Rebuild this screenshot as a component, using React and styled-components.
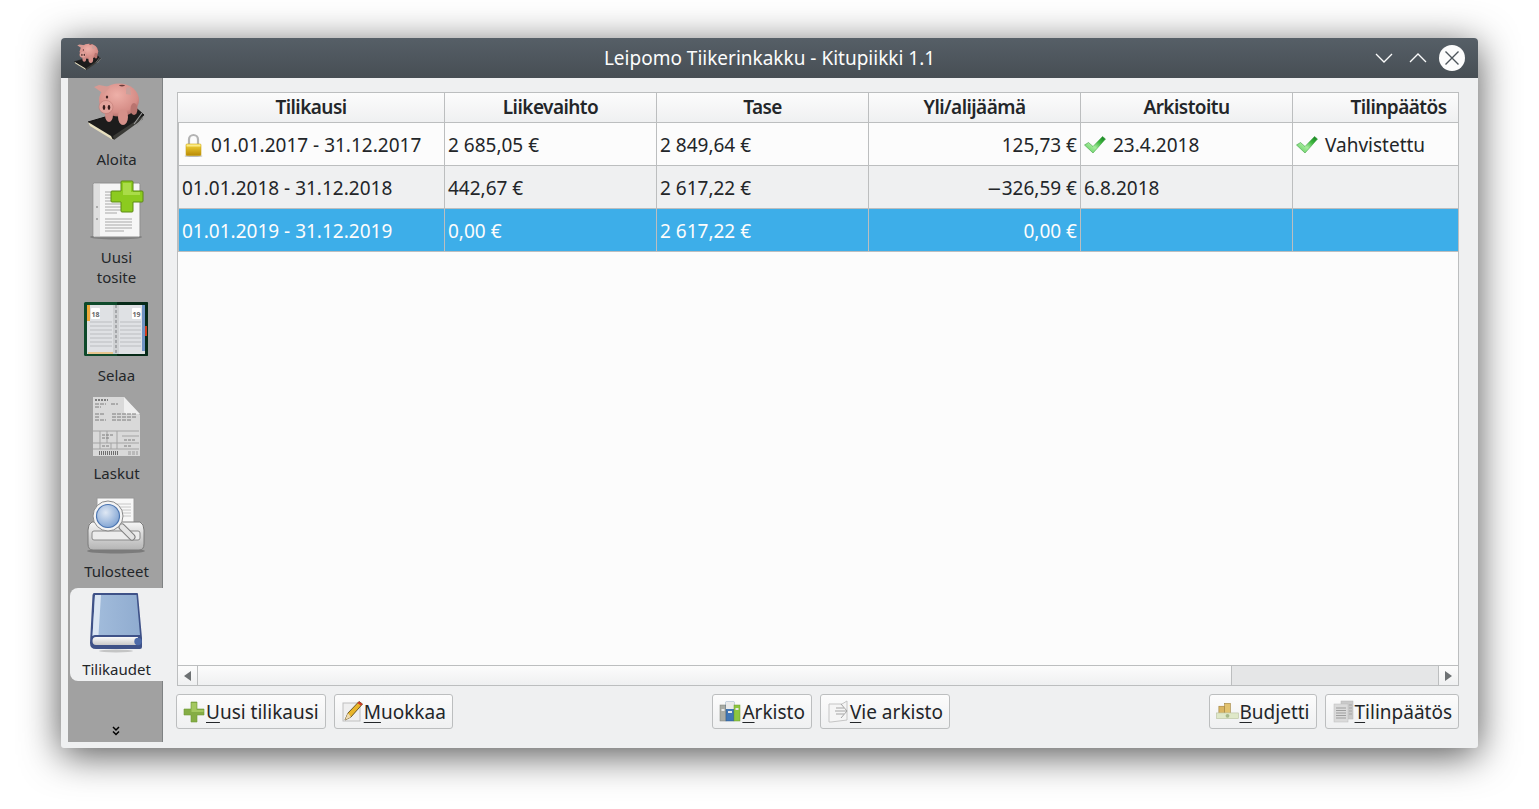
import styled, { createGlobalStyle } from "styled-components";

const GlobalStyle = createGlobalStyle`
  html, body { margin: 0; padding: 0; background: #fff; }
  body { font-family: "Noto Sans", "Open Sans", sans-serif; color: #232629; overflow: hidden; }
`;

const Page = styled.div`
  width: 1539px;
  height: 809px;
  padding: 38px 61px;
  box-sizing: border-box;
  overflow: hidden;
`;

const Win = styled.div`
  width: 1417px;
  height: 710px;
  display: flex;
  flex-direction: column;
  background: #eff0f1;
  border-radius: 4px 4px 3px 3px;
  box-shadow: 0 7px 38px rgba(0, 0, 0, 0.68);
  overflow: hidden;
`;

const TitleBar = styled.div`
  height: 40px;
  flex: none;
  display: grid;
  grid-template-columns: 1fr auto 1fr;
  align-items: center;
  background: linear-gradient(#565f67, #474e54);
  color: #fcfcfc;
  font-size: 19px;
  padding: 0 13px;
  box-sizing: border-box;
`;

const TitleIcon = styled.div`
  width: 30px;
  height: 28px;
  margin: -3px 0 0 -1px;
`;

const WinButtons = styled.div`
  display: flex;
  justify-content: flex-end;
  align-items: center;
  gap: 10px;
`;

const WinBtn = styled.div`
  width: 24px;
  height: 26px;
  display: flex;
  align-items: center;
  justify-content: center;
`;

const CloseBtn = styled.div`
  width: 26px;
  height: 26px;
  margin-left: -1px;
  border-radius: 50%;
  background: #fcfcfc;
  display: flex;
  align-items: center;
  justify-content: center;
`;

const Body = styled.div`
  flex: 1;
  min-height: 0;
  display: flex;
  padding-left: 7px;
`;

const Sidebar = styled.div`
  width: 95px;
  flex: none;
  margin-bottom: 6px;
  background: #a1a1a1;
  border-right: 1px solid #7f8283;
  box-sizing: border-box;
  display: flex;
  flex-direction: column;
  align-items: flex-end;
  font-size: 15px;
`;

const NavItem = styled.div`
  width: 93px;
  margin-right: -1px;
  margin-bottom: 5px;
  padding: 4px 0 2px;
  display: flex;
  flex-direction: column;
  align-items: center;
  box-sizing: border-box;
  border-radius: 8px 0 0 8px;
  background: ${(p) => (p.$active ? "#eff0f1" : "transparent")};
  svg { display: block; overflow: visible; }
`;

const NavLabel = styled.div`
  margin-top: 7px;
  line-height: 20px;
  text-align: center;
  color: #232629;
`;

const More = styled.div`
  margin-top: auto;
  width: 93px;
  height: 16px;
  display: flex;
  justify-content: center;
`;

const Main = styled.div`
  flex: 1;
  min-width: 0;
  display: flex;
  flex-direction: column;
  padding: 14px 19px 19px 14px;
`;

const TableFrame = styled.div`
  flex: 1;
  min-height: 0;
  display: flex;
  flex-direction: column;
  background: #fcfcfc;
  border: 1px solid #bcbebf;
  overflow: hidden;
  font-size: 19px;
`;

const TableView = styled.div`
  flex: 1;
  min-height: 0;
  overflow: hidden;
`;

const Table = styled.table`
  width: 1327px;
  table-layout: fixed;
  border-collapse: separate;
  border-spacing: 0;
`;

const Th = styled.th`
  height: 30px;
  padding: 0 0 2px;
  box-sizing: border-box;
  font-size: 19px;
  font-weight: 600;
  letter-spacing: -0.55px;
  text-align: center;
  color: #232629;
  background: linear-gradient(#fcfcfc, #eff0f1);
  border-right: 1px solid #bcbebf;
  border-bottom: 1px solid #bcbebf;
`;

const Td = styled.td`
  height: 43px;
  padding: 2px 3px 0;
  box-sizing: border-box;
  white-space: nowrap;
  text-align: ${(p) => (p.$right ? "right" : "left")};
  color: ${(p) => (p.$selected ? "#fcfcfc" : "#232629")};
  background: ${(p) => (p.$selected ? "#3daee9" : p.$alt ? "#eff0f1" : "#fcfcfc")};
  border-right: 1px solid #bcbebf;
  border-bottom: 1px solid #bcbebf;
  &:first-child { border-left: 1px solid #bcbebf; }
`;

const CellInner = styled.div`
  display: flex;
  align-items: center;
  gap: 5px;
  svg { flex: none; }
`;

const Minus = styled.span`
  font-family: "DejaVu Sans", sans-serif;
  font-size: 18px;
`;

const ScrollBar = styled.div`
  height: 20px;
  flex: none;
  display: flex;
  border-top: 1px solid #bcbebf;
  box-sizing: border-box;
`;

const ScrollBtn = styled.div`
  width: 20px;
  flex: none;
  display: flex;
  align-items: center;
  justify-content: center;
  background: linear-gradient(#fcfcfc, #eff0f1);
  border-${(p) => (p.$end ? "left" : "right")}: 1px solid #bcbebf;
  box-sizing: border-box;
`;

const ScrollThumb = styled.div`
  flex: 1035;
  background: linear-gradient(#fcfcfc, #eff0f1);
`;

const ScrollTrack = styled.div`
  flex: 206;
  background: #e5e6e7;
  border-left: 1px solid #bcbebf;
  box-sizing: border-box;
`;

const ButtonRow = styled.div`
  flex: none;
  margin-top: 8px;
  margin-left: -1px;
  display: flex;
  justify-content: space-between;
`;

const ButtonGroup = styled.div`
  display: flex;
  gap: 8px;
`;

const Button = styled.button`
  height: 35px;
  padding: 0 6px;
  display: flex;
  align-items: center;
  font-family: inherit;
  font-size: 19px;
  color: #232629;
  background: linear-gradient(#fcfcfc, #eff0f1);
  border: 1px solid #bcbebf;
  border-radius: 3px;
  box-sizing: border-box;
  svg { flex: none; width: 23px; height: 23px; }
`;

const Mnemonic = styled.span`
  text-decoration: underline;
  text-underline-offset: 3px;
  text-decoration-thickness: 1px;
`;

const Piggy = ({ width = 64, height = 60 }) => (
  <svg width={width} height={height} viewBox="-1 0 64 60">
    <defs>
      <radialGradient id="pigSkin" cx="0.45" cy="0.35" r="0.75">
        <stop offset="0" stopColor="#eeb0a8" />
        <stop offset="0.7" stopColor="#d58c86" />
        <stop offset="1" stopColor="#9c5f5c" />
      </radialGradient>
    </defs>
    <path d="M2 40 L50 26 L58 33 L27 57 Z" fill="#1c1c1c" stroke="#111" strokeWidth="1" />
    <path d="M2 40 L25 54 L27 58 L4 44 Z" fill="#e8e0c0" />
    <path d="M27 54 L57 34 L57 37 L28 58 Z" fill="#3a3a36" />
    <path d="M48 42 L56 31 M51 43 L59 33" stroke="#9a9a9a" strokeWidth="1.2" fill="none" />
    <ellipse cx="33" cy="18" rx="20" ry="16.5" fill="url(#pigSkin)" />
    <path d="M18 12 L8 5 L13 3 L24 5 Z" fill="#d89a93" />
    <path d="M40 6 L44 5 L45 13 L40 12 Z" fill="#c9a09b" />
    <ellipse cx="23" cy="33" rx="4" ry="7" fill="#d08a85" />
    <ellipse cx="37" cy="35" rx="5" ry="8" fill="#d59089" />
    <ellipse cx="48" cy="27" rx="3.5" ry="6" fill="#b9746f" />
    <ellipse cx="20" cy="25" rx="7" ry="6.5" fill="#e3a39c" stroke="#b9746f" strokeWidth="0.5" />
    <ellipse cx="18" cy="25.5" rx="1.3" ry="2.4" fill="#3a1e1e" />
    <ellipse cx="23" cy="25.5" rx="1.3" ry="2.4" fill="#3a1e1e" />
    <ellipse cx="21" cy="15" rx="1.2" ry="1.6" fill="#40201f" />
    <ellipse cx="36" cy="3.6" rx="3" ry="0.8" fill="#6b3d3b" />
  </svg>
);

const NewDocIcon = () => (
  <svg width="64" height="60" viewBox="-1 0 64 60">
    <ellipse cx="30" cy="57" rx="26" ry="2.5" fill="#555" opacity="0.45" />
    <rect x="7" y="3" width="47" height="54" rx="1.5" fill="#f6f6f6" stroke="#8f8f8f" />
    <rect x="8" y="4" width="6" height="52" fill="#dedede" />
    <g stroke="#a8a8a8" strokeWidth="1">
      <path d="M19 12H34M19 15H33M19 18H34M19 21H42M19 24H42M19 27H42M19 30H42M19 33H31" />
      <path d="M19 39H46M19 42H46M19 45H46M19 48H46M19 51H38" />
    </g>
    <circle cx="11" cy="27" r="1" fill="#999" />
    <circle cx="11" cy="39" r="1" fill="#999" />
    <path d="M36 1h10a1 1 0 0 1 1 1v9h9a1 1 0 0 1 1 1v9a1 1 0 0 1-1 1h-9v9a1 1 0 0 1-1 1H36a1 1 0 0 1-1-1v-9h-9a1 1 0 0 1-1-1v-9a1 1 0 0 1 1-1h9V2a1 1 0 0 1 1-1z" fill="#8ccb1f" stroke="#5d8a15" strokeWidth="1" />
    <path d="M37 3h8v9h9v3H37z" fill="#b6e35a" opacity="0.7" />
  </svg>
);

const DiaryIcon = () => (
  <svg width="64" height="60" viewBox="-1 0 64 60">
    <rect x="-2" y="4" width="64" height="54" rx="1.5" fill="#0e4a2b" />
    <rect x="31" y="4" width="31" height="54" rx="1" fill="#062a18" />
    <rect x="1" y="7" width="58" height="49" fill="#dfe1e4" />
    <rect x="1" y="7" width="3" height="16" fill="#f0a93a" />
    <rect x="56" y="7" width="3" height="46" fill="#6f93c4" />
    <rect x="59" y="28" width="2" height="10" fill="#d03a1a" />
    <path d="M2 55H28" stroke="#f0a93a" strokeWidth="1" />
    <g stroke="#c7c9cc" strokeWidth="1.5">
      <path d="M4 24H26M4 28H26M4 32H26M4 36H26M4 40H26M4 44H26M4 48H26" />
      <path d="M34 24H55M34 28H55M34 32H55M34 36H55M34 40H55M34 44H55M34 48H55" />
    </g>
    <rect x="27" y="7" width="6" height="49" fill="#cfd1d3" />
    <path d="M30 7V56" stroke="#a5a7aa" strokeWidth="2" strokeDasharray="3 2" />
    <rect x="5" y="10" width="9" height="11" rx="1" fill="#fff" />
    <rect x="46" y="10" width="9" height="11" rx="1" fill="#fff" />
    <text x="9.5" y="18.5" textAnchor="middle" fontSize="7" fontWeight="700" fill="#666" fontFamily="Noto Sans">18</text>
    <text x="50.5" y="18.5" textAnchor="middle" fontSize="7" fontWeight="700" fill="#666" fontFamily="Noto Sans">19</text>
  </svg>
);

const InvoiceIcon = () => (
  <svg width="64" height="60" viewBox="-1 0 64 60">
    <path d="M7 1H38L54 19V60H7Z" fill="#d9d9d9" />
    <path d="M38 1V15a3 3 0 0 0 3 3H54Z" fill="#efefef" />
    <g stroke="#7d7d7d" strokeWidth="1" fill="none">
      <path d="M9 4H22" strokeWidth="2" strokeDasharray="2 1" />
      <path d="M9 8H20M9 11H15M25 8H32M9 18H19M9 21H14M9 24H20M26 18H50M26 21H50M26 24H46" strokeDasharray="4 1" />
      <path d="M7 35H53M21 35V47M7 47H53M7 53H53M14 35V53M25 47V53M36 40H53M31 35V53" stroke="#a3a3a3" />
      <path d="M16 39H28M16 42H24M16 50H24M38 44H50M38 50H46" strokeDasharray="3 1" />
    </g>
    <path d="M13 57H32" stroke="#6e6e6e" strokeWidth="4" strokeDasharray="1 1" />
    <path d="M42 56H52M42 58H52" stroke="#9a9a9a" strokeDasharray="3 1" />
  </svg>
);

const PrintIcon = () => (
  <svg width="64" height="60" viewBox="-1 0 64 60">
    <defs>
      <linearGradient id="printBody" x1="0" x2="0" y1="0" y2="1">
        <stop offset="0" stopColor="#f6f6f6" />
        <stop offset="1" stopColor="#b4b4b4" />
      </linearGradient>
      <radialGradient id="lens" cx="0.4" cy="0.35" r="0.7">
        <stop offset="0" stopColor="#dfe8f4" />
        <stop offset="1" stopColor="#7ea2d2" />
      </radialGradient>
    </defs>
    <ellipse cx="30" cy="57" rx="29" ry="2.5" fill="#555" opacity="0.5" />
    <rect x="11" y="4" width="37" height="30" fill="#f7f7f7" stroke="#9a9a9a" />
    <path d="M30 10H45M30 13H45M30 16H45M30 19H45M30 22H45" stroke="#c6c6c6" />
    <path d="M6 28H54Q58 30 58 36V50Q58 56 53 56H7Q2 56 2 50V36Q2 30 6 28Z" fill="url(#printBody)" stroke="#7a7a7a" />
    <rect x="6" y="37" width="48" height="9" rx="2" fill="#ececec" stroke="#8a8a8a" />
    <path d="M36 33L46 43" stroke="#7f7f7f" strokeWidth="7" strokeLinecap="round" />
    <path d="M36 33L46 43" stroke="#e4e4e4" strokeWidth="5" strokeLinecap="round" />
    <circle cx="22" cy="22" r="15" fill="#f4f4f4" stroke="#8a8a8a" />
    <circle cx="22" cy="22" r="11.5" fill="url(#lens)" stroke="#4a74b0" strokeWidth="1.2" />
  </svg>
);

const BookIcon = () => (
  <svg width="64" height="60" viewBox="-2 0 64 60">
    <defs>
      <linearGradient id="bookCover" x1="0" x2="1" y1="0" y2="0">
        <stop offset="0" stopColor="#a3bddc" />
        <stop offset="1" stopColor="#90acd0" />
      </linearGradient>
      <linearGradient id="bookPages" x1="0" x2="0" y1="0" y2="1">
        <stop offset="0" stopColor="#fafafa" />
        <stop offset="1" stopColor="#c9c9c9" />
      </linearGradient>
    </defs>
    <ellipse cx="29" cy="59" rx="17" ry="1.4" fill="#999" opacity="0.5" />
    <path d="M7 1H50Q51 1 51 2L55 46V55Q55 57 53 57H9Q3 57 3 51L5.5 3Q6 1 7 1Z" fill="#3f5288" />
    <path d="M8 3H49.5L53 43H8Q6 43 5.5 44Z" fill="url(#bookCover)" />
    <path d="M8 3H14L11.5 43H8Q6 43 5.5 44Z" fill="#dbe6f3" />
    <path d="M9 45H51V53H9Q5.5 53 5.5 49Q5.5 45 9 45Z" fill="url(#bookPages)" />
    <circle cx="51" cy="49.5" r="3.7" fill="#4d6aa8" />
  </svg>
);

const Chevrons = () => (
  <svg width="8" height="10" viewBox="0 0 8 10" fill="none" stroke="#000" strokeWidth="1.5">
    <path d="M1 1l3 3 3-3M1 5.5l3 3 3-3" />
  </svg>
);

const Lock = () => (
  <svg width="24" height="24" viewBox="0 0 24 24">
    <defs>
      <linearGradient id="lockBody" x1="0" x2="0" y1="0" y2="1">
        <stop offset="0" stopColor="#f5d63a" />
        <stop offset="1" stopColor="#b98a06" />
      </linearGradient>
    </defs>
    <ellipse cx="11.5" cy="23" rx="9" ry="1" fill="#bbb" />
    <path d="M7 11V6.5a4.5 4.5 0 0 1 9 0V11" fill="none" stroke="#b4b4b4" strokeWidth="2.2" />
    <rect x="4" y="11" width="15" height="11.5" rx="1" fill="url(#lockBody)" stroke="#c9a416" strokeWidth="0.6" />
    <rect x="4.5" y="11.5" width="14" height="2" fill="#fbeb8a" />
  </svg>
);

const Check = () => (
  <svg width="24" height="20" viewBox="0 0 24 20">
    <defs>
      <linearGradient id="checkFill" x1="0" x2="1" y1="1" y2="0">
        <stop offset="0" stopColor="#4fc94f" />
        <stop offset="0.42" stopColor="#a5eb9c" />
        <stop offset="0.68" stopColor="#3fb83f" />
        <stop offset="1" stopColor="#0f7a1e" />
      </linearGradient>
    </defs>
    <path d="M0.5 10L4.5 7.5L9 11.5L18.5 1.5L21.5 4L9 18Z" fill="url(#checkFill)" stroke="#3f9f43" strokeWidth="0.6" />
  </svg>
);

const PlusSmall = () => (
  <svg width="23" height="23" viewBox="0 0 23 23">
    <path d="M8 2h6v7h7v6h-7v7H8v-7H1V9h7z" fill="#85ad45" stroke="#6f9a38" strokeWidth="0.6" />
    <path d="M8.5 3h5v7h7v2H8.5z" fill="#a4c860" />
  </svg>
);

const PencilSmall = () => (
  <svg width="23" height="23" viewBox="0 0 23 23">
    <rect x="2" y="3" width="17" height="18" fill="#efefef" stroke="#c0c0c0" />
    <path d="M4 20L7 13L18 1.5L21.5 4L10 17Z" fill="#e8b52a" stroke="#4b3a10" strokeWidth="0.8" />
    <path d="M18 1.5L21.5 4L20 5.8L16.5 3Z" fill="#cf3a2a" />
    <path d="M4 20L7 13L10 17Z" fill="#f0dcb0" />
  </svg>
);

const BindersSmall = () => (
  <svg width="23" height="23" viewBox="0 0 23 23">
    <rect x="1" y="5" width="6" height="16" fill="#a9aca5" stroke="#7c7f78" strokeWidth="0.5" />
    <rect x="7" y="2" width="8" height="19" fill="#3f76b5" stroke="#2c5788" strokeWidth="0.5" />
    <rect x="7" y="2" width="8" height="7" fill="#e9eaea" />
    <rect x="15" y="5" width="6" height="16" fill="#8dc63f" stroke="#6d9a30" strokeWidth="0.5" />
    <rect x="2.5" y="9" width="3" height="2" fill="#e8e8e8" />
    <rect x="9" y="11" width="4" height="2" fill="#e8e8e8" />
    <rect x="16.5" y="8" width="3" height="2" fill="#e8e8e8" />
  </svg>
);

const ExportSmall = () => (
  <svg width="23" height="23" viewBox="0 0 23 23">
    <path d="M2 4H15L20 1V20L4 22H2Z" fill="#f5f5f5" stroke="#c5c5c5" />
    <path d="M9 8H17M8 11H20M9 14H17" stroke="#a5a5a5" fill="none" />
    <path d="M14 4L20 11L14 18" stroke="#a5a5a5" fill="none" />
  </svg>
);

const MoneySmall = () => (
  <svg width="24" height="23" viewBox="0 0 24 23">
    <rect x="3" y="6" width="6" height="8" fill="#d9b562" stroke="#9c7f3b" strokeWidth="0.6" />
    <rect x="9" y="3" width="6" height="11" fill="#e2c26e" stroke="#9c7f3b" strokeWidth="0.6" />
    <rect x="0.5" y="13" width="23" height="6" fill="#dfe8c8" stroke="#b7bf9f" strokeWidth="0.6" />
    <circle cx="12" cy="16" r="2" fill="#a7b988" />
  </svg>
);

const PapersSmall = () => (
  <svg width="23" height="23" viewBox="0 0 23 23">
    <rect x="9" y="1" width="12" height="18" fill="#c9c9c9" stroke="#b5b5b5" strokeWidth="0.5" />
    <rect x="2" y="4" width="14" height="18" fill="#dadada" stroke="#bdbdbd" strokeWidth="0.5" />
    <path d="M4 8H14M4 10.5H14M4 13H14M4 15.5H14M4 18H14" stroke="#9e9e9e" />
    <path d="M17 5H20M17 8H20M17 11H20M17 14H20" stroke="#a5a5a5" />
  </svg>
);

const columns = [
  { title: "Tilikausi", width: 267 },
  { title: "Liikevaihto", width: 212 },
  { title: "Tase", width: 212 },
  { title: "Yli/alijäämä", width: 212 },
  { title: "Arkistoitu", width: 212 },
  { title: "Tilinpäätös", width: 212 },
];

const rows = [
  { period: "01.01.2017 - 31.12.2017", locked: true, revenue: "2 685,05 €", balance: "2 849,64 €", result: "125,73 €", archived: "23.4.2018", archivedOk: true, closing: "Vahvistettu" },
  { period: "01.01.2018 - 31.12.2018", revenue: "442,67 €", balance: "2 617,22 €", result: "326,59 €", negative: true, archived: "6.8.2018", alt: true },
  { period: "01.01.2019 - 31.12.2019", revenue: "0,00 €", balance: "2 617,22 €", result: "0,00 €", selected: true },
];

const navItems = [
  { label: "Aloita", icon: <Piggy /> },
  { label: "Uusi", label2: "tosite", icon: <NewDocIcon /> },
  { label: "Selaa", icon: <DiaryIcon /> },
  { label: "Laskut", icon: <InvoiceIcon /> },
  { label: "Tulosteet", icon: <PrintIcon /> },
  { label: "Tilikaudet", icon: <BookIcon />, active: true },
];

const App = () => {
  return (
    <Page>
      <GlobalStyle />
      <Win>
        <TitleBar>
          <TitleIcon>
            <Piggy width={30} height={28} />
          </TitleIcon>
          <div>Leipomo Tiikerinkakku - Kitupiikki 1.1</div>
          <WinButtons>
            <WinBtn>
              <svg width="18" height="10" viewBox="0 0 18 10" fill="none" stroke="#fcfcfc" strokeWidth="1.3">
                <path d="M1 1l8 8 8-8" />
              </svg>
            </WinBtn>
            <WinBtn>
              <svg width="18" height="10" viewBox="0 0 18 10" fill="none" stroke="#fcfcfc" strokeWidth="1.3">
                <path d="M1 9l8-8 8 8" />
              </svg>
            </WinBtn>
            <CloseBtn>
              <svg width="16" height="16" viewBox="0 0 16 16" fill="none" stroke="#4d555b" strokeWidth="1.4">
                <path d="M1.5 1.5l13 13M14.5 1.5l-13 13" />
              </svg>
            </CloseBtn>
          </WinButtons>
        </TitleBar>
        <Body>
          <Sidebar>
            {navItems.map((item) => (
              <NavItem key={item.label} $active={item.active}>
                {item.icon}
                <NavLabel>
                  {item.label}
                  {item.label2 && <br />}
                  {item.label2}
                </NavLabel>
              </NavItem>
            ))}
            <More>
              <Chevrons />
            </More>
          </Sidebar>
          <Main>
            <TableFrame>
              <TableView>
                <Table>
                  <colgroup>
                    {columns.map((c) => (
                      <col key={c.title} width={c.width} />
                    ))}
                  </colgroup>
                  <thead>
                    <tr>
                      {columns.map((c) => (
                        <Th key={c.title}>{c.title}</Th>
                      ))}
                    </tr>
                  </thead>
                  <tbody>
                    {rows.map((r) => (
                      <tr key={r.period}>
                        <Td $alt={r.alt} $selected={r.selected}>
                          <CellInner>
                            {r.locked && <Lock />}
                            {r.period}
                          </CellInner>
                        </Td>
                        <Td $alt={r.alt} $selected={r.selected}>{r.revenue}</Td>
                        <Td $alt={r.alt} $selected={r.selected}>{r.balance}</Td>
                        <Td $alt={r.alt} $selected={r.selected} $right>
                          {r.negative && <Minus>−</Minus>}
                          {r.result}
                        </Td>
                        <Td $alt={r.alt} $selected={r.selected}>
                          <CellInner>
                            {r.archivedOk && <Check />}
                            {r.archived}
                          </CellInner>
                        </Td>
                        <Td $alt={r.alt} $selected={r.selected}>
                          <CellInner>
                            {r.closing && <Check />}
                            {r.closing}
                          </CellInner>
                        </Td>
                      </tr>
                    ))}
                  </tbody>
                </Table>
              </TableView>
              <ScrollBar>
                <ScrollBtn>
                  <svg width="7" height="10" viewBox="0 0 7 10"><path d="M7 0v10L0 5z" fill="#6d7173" /></svg>
                </ScrollBtn>
                <ScrollThumb />
                <ScrollTrack />
                <ScrollBtn $end>
                  <svg width="7" height="10" viewBox="0 0 7 10"><path d="M0 0v10l7-5z" fill="#6d7173" /></svg>
                </ScrollBtn>
              </ScrollBar>
            </TableFrame>
            <ButtonRow>
              <ButtonGroup>
                <Button><PlusSmall /><Mnemonic>U</Mnemonic>usi tilikausi</Button>
                <Button><PencilSmall /><Mnemonic>M</Mnemonic>uokkaa</Button>
              </ButtonGroup>
              <ButtonGroup>
                <Button><BindersSmall /><Mnemonic>A</Mnemonic>rkisto</Button>
                <Button><ExportSmall /><Mnemonic>V</Mnemonic>ie arkisto</Button>
              </ButtonGroup>
              <ButtonGroup>
                <Button><MoneySmall /><Mnemonic>B</Mnemonic>udjetti</Button>
                <Button><PapersSmall /><Mnemonic>T</Mnemonic>ilinpäätös</Button>
              </ButtonGroup>
            </ButtonRow>
          </Main>
        </Body>
      </Win>
    </Page>
  );
};

export default App;
